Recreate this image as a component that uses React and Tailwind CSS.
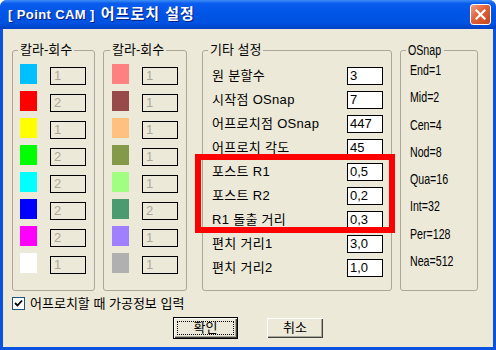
import React from "react";

const KO = { fontFamily: '"Liberation Sans", "Noto Sans CJK KR", sans-serif' };
const LAT = { fontFamily: '"Liberation Sans", sans-serif' };

const colorsA = [
  ["bg-[#00c0ff]", "1"],
  ["bg-[#ff0000]", "2"],
  ["bg-[#ffff00]", "1"],
  ["bg-[#00ff00]", "2"],
  ["bg-[#00ffff]", "2"],
  ["bg-[#0000ff]", "2"],
  ["bg-[#ff00ff]", "2"],
  ["bg-[#ffffff]", "1"],
];

const colorsB = [
  ["bg-[#ff8080]", "1"],
  ["bg-[#984a4a]", "1"],
  ["bg-[#ffc080]", "1"],
  ["bg-[#849a4a]", "1"],
  ["bg-[#a0ff80]", "1"],
  ["bg-[#4c9a70]", "2"],
  ["bg-[#a080ff]", "1"],
  ["bg-[#b0b0b0]", "1"],
];

const settings = [
  ["원 분할수", "3"],
  ["시작점 OSnap", "7"],
  ["어프로치점 OSnap", "447"],
  ["어프로치 각도", "45"],
  ["포스트 R1", "0,5"],
  ["포스트 R2", "0,2"],
  ["R1 돌출 거리", "0,3"],
  ["편치 거리1", "3,0"],
  ["편치 거리2", "1,0"],
];

const osnap = ["End=1", "Mid=2", "Cen=4", "Nod=8", "Qua=16", "Int=32", "Per=128", "Nea=512"];

function GroupTitle({ children, style, narrow }) {
  return (
    <span
      className={`-mt-[9px] ml-[5px] self-start px-[2px] h-[16px] leading-[16px] text-black bg-[#ece9d8] ${narrow ? "w-[38px] text-[14px]" : "text-[13px]"}`}
      style={style}
    >
      {narrow ? (
        <span className="inline-block scale-x-[0.76] origin-left">{children}</span>
      ) : (
        children
      )}
    </span>
  );
}

function ColorGroup({ items, pad }) {
  return (
    <div className={`flex flex-col border border-[#aca899] rounded-[3px] h-[241px] ${pad}`}>
      <GroupTitle style={KO}>칼라-회수</GroupTitle>
      <div className="mt-[6px] flex flex-col gap-[6px] pl-[7px]">
        {items.map(([c, v], i) => (
          <div key={i} className="flex items-start">
            <div className={`w-[17px] h-[20px] ${c}`} />
            <div
              className="ml-[13px] mt-[3px] w-[36px] h-[18px] border border-black pl-[3px] text-[13px] leading-[16px] text-[#aca899]"
              style={KO}
            >
              {v}
            </div>
          </div>
        ))}
      </div>
    </div>
  );
}

function App() {
  return (
    <div className="w-[496px] h-[350px] bg-white">
      <div className="w-[496px] h-[350px] flex flex-col bg-[#0a52e0] rounded-t-[7px] overflow-hidden">
        {/* title bar */}
        <div className="h-[29px] flex items-center pl-[8px] pr-[5px] bg-[linear-gradient(to_bottom,#3d8df7_0%,#0a5cee_12%,#0055e6_45%,#0052e0_80%,#0040c4_100%)]">
          <span className="flex-1 flex items-center text-white font-bold [text-shadow:1px_1px_0_#0a1c80]">
            <span className="text-[13px] tracking-[0.4px]" style={LAT}>
              [ Point CAM ]
            </span>
            <span className="ml-[6px] text-[15px] tracking-[1px]" style={KO}>
              어프로치 설정
            </span>
          </span>
          <div className="w-[21px] h-[21px] rounded-[3px] border border-white bg-[linear-gradient(135deg,#f0a080,#e0603a_45%,#c2451c)] flex items-center justify-center">
            <svg width="11" height="11" viewBox="0 0 11 11">
              <path d="M1.5 1.5 L9.5 9.5 M9.5 1.5 L1.5 9.5" stroke="white" strokeWidth="2.2" strokeLinecap="square" />
            </svg>
          </div>
        </div>

        {/* body */}
        <div className="relative flex-1 mx-[3px] mb-[3px] bg-[#ece9d8] flex flex-col">
          <div className="mt-[21px] pl-[9px] flex items-start">
            <div className="w-[83px]">
              <ColorGroup items={colorsA} pad="" />
            </div>
            <div className="ml-[8px] w-[84px]">
              <ColorGroup items={colorsB} pad="pl-[1px]" />
            </div>

            {/* 기타 설정 */}
            <div className="ml-[15px] w-[190px] h-[241px] flex flex-col border border-[#aca899] rounded-[3px]">
              <GroupTitle style={KO}>기타 설정</GroupTitle>
              <div className="mt-[9px] pl-[9px] flex flex-col gap-[6px]">
                {settings.map(([label, v]) => (
                  <div key={label} className="flex items-center h-[18px]">
                    <span className="w-[135px] text-[13px] tracking-[0.3px] text-black" style={KO}>
                      {label}
                    </span>
                    <div
                      className="w-[36px] h-[18px] border border-black bg-white pl-[2px] text-[13px] leading-[16px] text-black"
                      style={KO}
                    >
                      {v}
                    </div>
                  </div>
                ))}
              </div>
            </div>

            {/* OSnap */}
            <div className="ml-[8px] w-[78px] h-[241px] flex flex-col border border-[#aca899] rounded-[3px]">
              <GroupTitle style={LAT} narrow>
                OSnap
              </GroupTitle>
              <div className="mt-[4px] pl-[9px] flex flex-col gap-[11.3px]">
                {osnap.map((t) => (
                  <span key={t} className="h-[16px] leading-[16px] text-[14px] text-black" style={LAT}>
                    <span className="inline-block scale-x-[0.76] origin-left">{t}</span>
                  </span>
                ))}
              </div>
            </div>
          </div>

          {/* checkbox */}
          <div className="mt-[6px] pl-[9px] flex items-center">
            <div className="w-[13px] h-[13px] border border-[#1c5180] bg-white flex items-center justify-center">
              <svg width="9" height="9" viewBox="0 0 9 9">
                <path d="M1 4 L3.5 6.5 L8 1.5" stroke="black" strokeWidth="1.8" fill="none" />
              </svg>
            </div>
            <span className="ml-[5px] text-[13px] leading-[13px] text-black" style={KO}>
              어프로치할 때 가공정보 입력
            </span>
          </div>

          {/* buttons */}
          <div className="mt-[7px] flex items-center justify-center gap-[29px]">
            <button className="w-[65px] h-[22px] border border-black bg-[#ece9d8] shadow-[inset_1px_1px_0_#fff,inset_-1px_-1px_0_#404040,inset_-2px_-2px_0_#aca899] flex items-center justify-center p-[3px]">
              <span
                className="w-full h-full border border-dotted border-black flex items-center justify-center text-[13px] text-black"
                style={KO}
              >
                확인
              </span>
            </button>
            <button
              className="w-[56px] h-[20px] bg-[#ece9d8] shadow-[inset_1px_1px_0_#fff,inset_-1px_-1px_0_#404040,inset_-2px_-2px_0_#aca899] flex items-center justify-center text-[13px] text-black"
              style={KO}
            >
              취소
            </button>
          </div>

          {/* red highlight */}
          <div className="absolute left-[192px] top-[125px] w-[200px] h-[79px] border-[6px] border-[#ff0000]" />
        </div>
      </div>
    </div>
  );
}

export default App;
